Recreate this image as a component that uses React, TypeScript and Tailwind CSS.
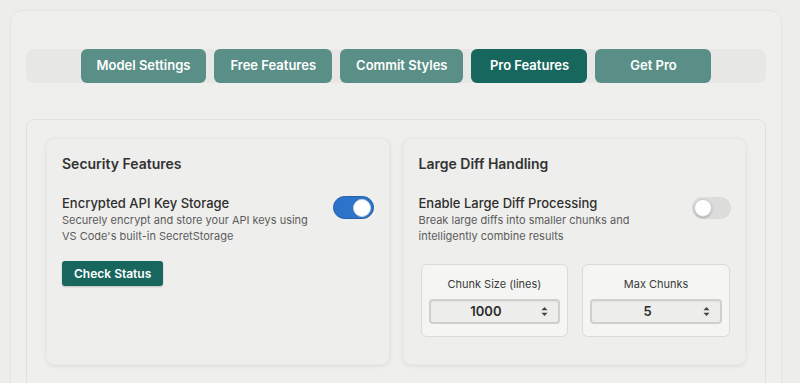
import React from "react";

const tabs = [
  { label: "Model Settings", active: false },
  { label: "Free Features", active: false },
  { label: "Commit Styles", active: false },
  { label: "Pro Features", active: true },
  { label: "Get Pro", active: false },
];

function Toggle({ on }: { on: boolean }) {
  return on ? (
    <div className="w-[41px] h-[23px] rounded-full bg-[#2c73c9] border border-[#2560a8] flex items-center justify-end pr-[2px] shrink-0">
      <div className="w-[18px] h-[18px] rounded-full bg-white border border-[#d0d7e0]" />
    </div>
  ) : (
    <div className="w-[39px] h-[22px] rounded-full bg-[#dcdcdb] flex items-center pl-[2px] shrink-0 mr-[-1px]">
      <div className="w-[18px] h-[18px] rounded-full bg-white border border-[#cfcfcf] shadow-[0_1px_2px_rgba(0,0,0,0.25)]" />
    </div>
  );
}

function NumberSelect({ value }: { value: string }) {
  return (
    <div className="mt-[7px] h-[25px] rounded-[4px] border-2 border-[#cfcfcd] bg-[#ededeb] flex items-center pr-[10px] shadow-[inset_0_1px_1px_rgba(0,0,0,0.04)]">
      <span className="flex-1 text-center text-[13px] font-semibold text-[#2b2b2b]">{value}</span>
      <svg width="7" height="11" viewBox="0 0 7 11" className="shrink-0">
        <path d="M3.5 1 L6.5 4.3 H0.5 Z" fill="#444" />
        <path d="M3.5 10 L6.5 6.7 H0.5 Z" fill="#444" />
      </svg>
    </div>
  );
}

function NumberBox({ label, value }: { label: string; value: string }) {
  return (
    <div className="rounded-md border border-[#dadad8] bg-[#f5f5f4] px-[7px] pt-[11px] pb-[12px]">
      <div className="text-center text-[11px] leading-4 text-[#3a3a3a]">{label}</div>
      <NumberSelect value={value} />
    </div>
  );
}

export default function App() {
  return (
    <div
      className="h-[383px] overflow-hidden bg-[#ededeb] p-[10px]"
      style={{ fontFamily: "Inter, 'Noto Sans', sans-serif" }}
    >
      <div className="w-[772px] h-[400px] rounded-xl border border-[#e3e3e1] bg-[#efefed] px-[15px] pt-[38px]">
        {/* Tabs */}
        <div className="h-[34px] rounded-lg bg-[#e7e7e5] flex justify-center gap-2">
          {tabs.map(t => (
            <button
              key={t.label}
              className={`h-full min-w-[116px] px-4 rounded-md text-[13px] font-semibold text-white ${t.active ? "bg-[#17675e]" : "bg-[#5a8f87]"}`}
            >
              {t.label}
            </button>
          ))}
        </div>

        {/* Pro features panel */}
        <div className="mt-[36px] h-[300px] rounded-lg border border-[#e1e1df] bg-[#efefed] px-[19px] pt-[18px]">
          <div className="grid grid-cols-2 gap-[13px]">
            {/* Security */}
            <div className="h-[227px] rounded-lg bg-[#eeeeec] border border-[#e8e8e6] shadow-[0_1px_4px_rgba(0,0,0,0.08)] p-[15px]">
              <div className="text-[14px] leading-5 font-semibold text-[#333]">Security Features</div>
              <div className="mt-5 flex items-start justify-between">
                <div>
                  <div className="text-[13px] leading-[18px] font-medium text-[#2e2e2e]">Encrypted API Key Storage</div>
                  <div className="text-[11px] leading-4 text-[#5c5c5c]">
                    Securely encrypt and store your API keys using<br />VS Code's built-in SecretStorage
                  </div>
                </div>
                <div className="pt-[2px]"><Toggle on /></div>
              </div>
              <button className="mt-[17px] h-[25px] px-3 rounded-[3px] bg-[#17675e] text-white text-[12px] font-semibold shadow-[0_1px_2px_rgba(0,0,0,0.2)]">
                Check Status
              </button>
            </div>

            {/* Large diff */}
            <div className="h-[227px] rounded-lg bg-[#eeeeec] border border-[#e8e8e6] shadow-[0_1px_4px_rgba(0,0,0,0.08)] p-[15px]">
              <div className="text-[14px] leading-5 font-semibold text-[#333]">Large Diff Handling</div>
              <div className="mt-5 flex items-start justify-between">
                <div>
                  <div className="text-[13px] leading-[18px] font-medium text-[#2e2e2e]">Enable Large Diff Processing</div>
                  <div className="text-[11px] leading-4 text-[#5c5c5c]">
                    Break large diffs into smaller chunks and<br />intelligently combine results
                  </div>
                </div>
                <div className="pt-[3px]"><Toggle on={false} /></div>
              </div>
              <div className="mt-5 grid grid-cols-2 gap-[14px] pl-[2px]">
                <NumberBox label="Chunk Size (lines)" value="1000" />
                <NumberBox label="Max Chunks" value="5" />
              </div>
            </div>
          </div>
        </div>
      </div>
    </div>
  );
}
